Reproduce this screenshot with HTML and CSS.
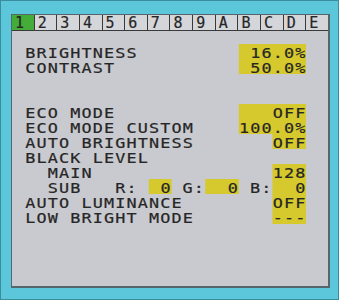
FILE: index.html
```html
<!DOCTYPE html>
<html>
<head>
<meta charset="utf-8">
<link rel="stylesheet" href="styles.css">
</head>
<body>
<div class="screen">
  <div class="osd">
    <div class="tabs">
      <span class="tab on">1</span><span class="tab">2</span><span class="tab">3</span><span class="tab">4</span><span class="tab">5</span><span class="tab">6</span><span class="tab">7</span><span class="tab">8</span><span class="tab">9</span><span class="tab">A</span><span class="tab">B</span><span class="tab">C</span><span class="tab">D</span><span class="tab">E</span>
    </div>
    <div class="menu">
      <div class="row"><span class="label">BRIGHTNESS</span><span class="val w6"><span>16.0%</span></span></div>
      <div class="row"><span class="label">CONTRAST</span><span class="val w6"><span>50.0%</span></span></div>
      <div class="row"></div>
      <div class="row"></div>
      <div class="row"><span class="label">ECO MODE</span><span class="val w6"><span>OFF</span></span></div>
      <div class="row"><span class="label">ECO MODE CUSTOM</span><span class="val w6"><span>100.0%</span></span></div>
      <div class="row"><span class="label">AUTO BRIGHTNESS</span><span class="val w3"><span>OFF</span></span></div>
      <div class="row"><span class="label">BLACK LEVEL</span></div>
      <div class="row"><span class="label sub">MAIN</span><span class="val w3"><span>128</span></span></div>
      <div class="row">
        <span class="label sub">SUB</span>
        <span class="key kr">R:</span><span class="val vr"><span>0</span></span>
        <span class="key kg">G:</span><span class="val vg"><span>0</span></span>
        <span class="key kb">B:</span><span class="val w3"><span>0</span></span>
      </div>
      <div class="row"><span class="label">AUTO LUMINANCE</span><span class="val w3"><span>OFF</span></span></div>
      <div class="row"><span class="label">LOW BRIGHT MODE</span><span class="val w3"><span>---</span></span></div>
    </div>
  </div>
</div>
</body>
</html>
```
FILE: styles.css
```css
html, body {
  margin: 0;
  padding: 0;
  background: #5cc6da;
}
.screen {
  width: 339px;
  height: 300px;
  box-sizing: border-box;
  background: #5cc6da;
  border: 1px solid #3b8c9c;
  padding: 13px 0 0 10px;
}
.osd {
  width: 319px;
  height: 274px;
  box-sizing: border-box;
  background: #c9cacf;
  border: 1px solid #55656c;
  border-right-width: 2px;
  border-bottom-width: 2px;
  font-family: "DejaVu Sans Mono", "Liberation Mono", monospace;
  font-size: 14px;
  color: #262626;
  -webkit-text-stroke: 0.2px #262626;
}
.tabs {
  display: flex;
  height: 16px;
  box-sizing: border-box;
  border-bottom: 1px solid #3a3a3a;
  background: #d5d6da;
  font-size: 15px;
}
.tab {
  flex: 1;
  border-right: 1px solid #3a3a3a;
  line-height: 16px;
  padding-left: 3px;
}
.tab:last-child {
  border-right: 0;
}
.tab.on {
  background: #44ad3a;
}
/* the OSD font is wide: lay the grid out at 1/1.2 width and stretch it */
.menu {
  width: 255px;
  box-sizing: border-box;
  padding: 13px 0 0 10.83px;
  transform: scaleX(1.2);
  transform-origin: 0 0;
  letter-spacing: 0.937px;
}
.row {
  display: grid;
  grid-template-columns: repeat(25, 9.367px);
  grid-template-rows: 15px;
  height: 15px;
  line-height: 12px;
  white-space: pre;
}
.row > span {
  grid-row: 1;
  padding-top: 3px;
  box-sizing: border-box;
}
.label {
  grid-column: 1 / 19;
  padding-left: 0.3px;
}
.label.sub {
  grid-column: 3 / 8;
}
.key {
  padding-left: 0.3px;
}
.kr { grid-column: 9 / 11; }
.kg { grid-column: 15 / 17; }
.kb { grid-column: 21 / 23; }
.val {
  background: #d6c92e;
  text-align: right;
}
.val > span {
  margin-right: -0.6px;
}
.val.w6 { grid-column: 20 / 26; }
.val.w3 { grid-column: 23 / 26; }
.val.vr { grid-column: 12 / 14; }
.val.vg { grid-column: 17 / 20; }
```
